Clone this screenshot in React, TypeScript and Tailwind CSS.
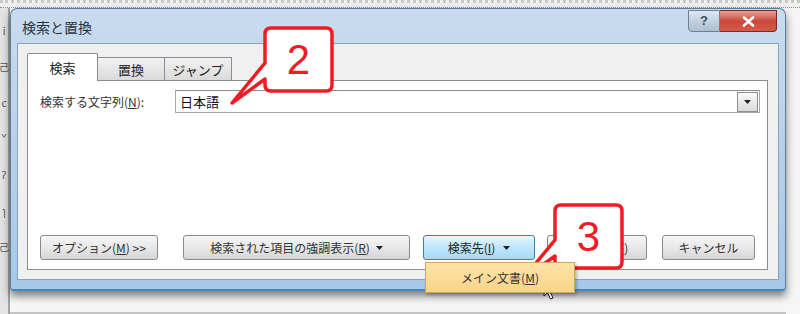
import React from "react";

const jp = "font-['Noto_Sans_CJK_JP','Noto_Sans',sans-serif]";

function Callout({ n, className }: { n: string; className: string }) {
  // 吹き出し: 角丸の四角 + 左下のしっぽ
  return (
    <div className={`absolute ${className}`}>
      <svg width="108" height="82" viewBox="0 0 108 82" className="absolute left-0 top-0">
        <path
          d="M43 3 H98 Q104 3 104 9 V60 Q104 66 98 66 H43 Q37 66 37 60 V54 L4 78 L37 38 V9 Q37 3 43 3 Z"
          fill="#ffffff"
          stroke="#ee1c25"
          strokeWidth="3.5"
          strokeLinejoin="round"
        />
      </svg>
      <div className="absolute left-[37px] top-[3px] w-[67px] h-[63px] flex items-center justify-center font-['Liberation_Sans',sans-serif] text-[42px] leading-none text-[#ee1c25]">
        {n}
      </div>
    </div>
  );
}

function Btn({
  children,
  className = "",
}: {
  children: React.ReactNode;
  className?: string;
}) {
  return (
    <div
      className={`h-[25px] flex items-center justify-center rounded-[3px] border border-[#8a8a8a] bg-gradient-to-b from-[#f6f6f6] via-[#e8e8e8] to-[#d6d6d6] text-[12px] text-[#333] ${className}`}
    >
      {children}
    </div>
  );
}

function Caret({ className = "" }: { className?: string }) {
  return (
    <svg width="7" height="4" viewBox="0 0 7 4" className={className}>
      <path d="M0 0 H7 L3.5 4 Z" fill="#222" />
    </svg>
  );
}

export default function App() {
  return (
    <div className={`relative w-[800px] h-[314px] overflow-hidden bg-[#f6f6f6] ${jp}`}>
      {/* 上のルーラー */}
      <div className="h-[8px] bg-[#f0f0f0] border-t-[3px] border-t-[#c8c8c8] border-b border-dotted border-b-[#8c8c8c]" />
      <div className="flex">
        {/* 左側の文書 */}
        <div className="w-[10px] h-[306px] bg-[#e4e4e4] border-r-2 border-[#a3a3a3] flex flex-col items-center gap-[26px] pt-[18px] text-[10px] leading-none text-[#555]">
          <span>i</span>
          <span>己</span>
          <span>ᴄ</span>
          <span>ˇ</span>
          <span>ʔ</span>
          <span>ɿ</span>
          <span>己</span>
        </div>

        <div className="flex flex-col">
          {/* ウィンドウ */}
          <div className="w-[776px] h-[283px] flex flex-col rounded-t-[7px] rounded-b-[3px] border border-[#5f7d9b] border-b-2 border-b-[#3d8bc4] bg-gradient-to-b from-[#c9dcef] via-[#b8d0e9] to-[#a6c9e8] shadow-[0_5px_9px_rgba(0,0,0,0.5)]">
            {/* タイトルバー */}
            <div className="h-[34px] flex items-start pl-[11px] pr-[8px]">
              <div className="mt-[8px] text-[14px] text-[#2a3542]">検索と置換</div>
              <div className="ml-auto flex mt-[1px]">
                <div className="w-[32px] h-[22px] flex items-center justify-center rounded-bl-[4px] border border-[#6b7f95] bg-gradient-to-b from-[#dfe8f1] via-[#c3d1df] to-[#aebfd1] text-[13px] font-bold text-[#3d4f63] font-['Liberation_Sans',sans-serif]">
                  ?
                </div>
                <div className="w-[57px] h-[22px] flex items-center justify-center rounded-br-[4px] border border-l-0 border-[#7a2a22] bg-gradient-to-b from-[#e9a096] via-[#c9493c] to-[#d45a47]">
                  <svg width="13" height="11" viewBox="0 0 13 11">
                    <path d="M2 1.5 L11 9.5 M11 1.5 L2 9.5" stroke="#ffffff" strokeWidth="2.6" strokeLinecap="round" />
                  </svg>
                </div>
              </div>
            </div>

            {/* クライアント領域 */}
            <div className="mx-[6px] h-[237px] flex flex-col border border-[#8aa3bd] bg-[#f0f0f0] pl-[9px] pr-[10px] pt-[9px] pb-[9px]">
              {/* タブ */}
              <div className="h-[28px] flex items-end text-[13px] text-[#222]">
                <div className="relative z-10 w-[71px] h-[28px] flex items-center justify-center border border-b-0 border-[#898c95] bg-white rounded-t-[2px]">
                  検索
                </div>
                <div className="w-[67px] h-[24px] flex items-center justify-center border border-l-0 border-b-0 border-[#898c95] bg-gradient-to-b from-[#f2f2f2] to-[#d9d9d9]">
                  置換
                </div>
                <div className="w-[67px] h-[24px] flex items-center justify-center border border-l-0 border-b-0 border-[#898c95] bg-gradient-to-b from-[#f2f2f2] to-[#d9d9d9]">
                  ジャンプ
                </div>
              </div>

              {/* タブパネル */}
              <div className="flex-1 -mt-px flex flex-col justify-between border border-[#898c95] bg-white pl-[12px] pr-[7px] pt-[9px] pb-[9px]">
                <div className="flex items-center">
                  <div className="w-[135px] text-[12px] text-[#333]">
                    検索する文字列(<span className="underline">N</span>):
                  </div>
                  <div className="flex-1 h-[23px] flex items-center border border-[#a7a7a7] border-t-[#8b8b8b] pl-[4px] pr-[1px]">
                    <span className="text-[13px] text-[#111]">日本語</span>
                    <div className="ml-auto w-[21px] h-[20px] flex items-center justify-center border border-[#8e8e8e] bg-gradient-to-b from-[#fafafa] to-[#dcdcdc]">
                      <Caret />
                    </div>
                  </div>
                </div>

                <div className="flex items-center">
                  <Btn className="w-[118px]">
                    オプション(<span className="underline">M</span>) &gt;&gt;
                  </Btn>
                  <Btn className="w-[227px] ml-[25px] gap-[6px]">
                    <span>
                      検索された項目の強調表示(<span className="underline">R</span>)
                    </span>
                    <Caret />
                  </Btn>
                  <div className="relative ml-[13px]">
                    <div className="w-[112px] h-[25px] flex items-center justify-center gap-[8px] rounded-[3px] border border-[#3c7fb1] bg-gradient-to-b from-[#eaf6fd] via-[#bee6fd] to-[#a7d9f5] text-[12px] text-[#222]">
                      <span>
                        検索先(<span className="underline">I</span>)
                      </span>
                      <Caret />
                    </div>
                    {/* ドロップダウン */}
                    <div className="absolute left-[2px] top-[27px] z-10 w-[150px] h-[31px] flex items-center justify-center border border-[#c9a95b] bg-gradient-to-b from-[#fde3a8] to-[#fbd48a] text-[12px] text-[#333] shadow-[2px_2px_3px_rgba(0,0,0,0.25)]">
                      メイン文書(<span className="underline">M</span>)
                    </div>
                  </div>
                  <Btn className="w-[100px] ml-[12px]">
                    次を検索(<span className="underline">F</span>)
                  </Btn>
                  <Btn className="w-[93px] ml-[15px]">キャンセル</Btn>
                </div>
              </div>
            </div>
          </div>
          {/* 下側 */}
          <div className="h-[23px] border-b-2 border-[#c4c4c4]" />
        </div>
      </div>

      <Callout n="2" className="left-[228px] top-[25px] w-[108px] h-[82px]" />
      <Callout n="3" className="left-[518px] top-[202px] w-[108px] h-[82px]" />

      {/* マウスカーソル */}
      <svg width="14" height="21" viewBox="0 0 14 21" className="absolute left-[543px] top-[280px]">
        <path
          d="M1 1 V16 L4.5 12.5 L7.5 19 L10 18 L7 11.5 H12 Z"
          fill="#ffffff"
          stroke="#1a1a1a"
          strokeWidth="1"
          strokeLinejoin="round"
        />
      </svg>
    </div>
  );
}
